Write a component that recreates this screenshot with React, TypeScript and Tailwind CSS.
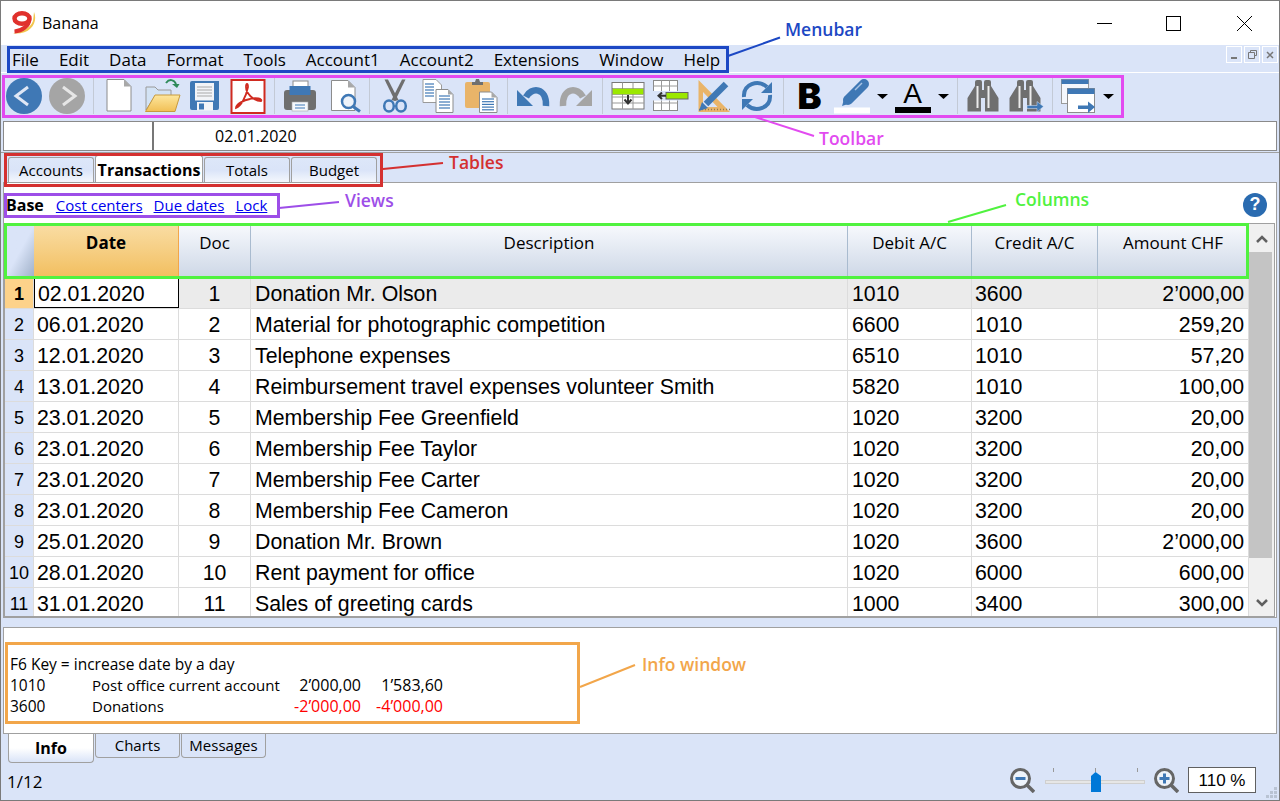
import React from 'react';

const UI = { fontFamily: '"Open Sans", "Noto Sans", sans-serif' };
const ARIAL = { fontFamily: '"Liberation Sans", Arial, sans-serif' };

const BLUE = '#3f78b5';
const GRAY = '#6f6f6f';

const menus = ['File', 'Edit', 'Data', 'Format', 'Tools', 'Account1', 'Account2', 'Extensions', 'Window', 'Help'];

const rows = [
  ['02.01.2020', '1', 'Donation Mr. Olson', '1010', '3600', '2’000,00'],
  ['06.01.2020', '2', 'Material for photographic competition', '6600', '1010', '259,20'],
  ['12.01.2020', '3', 'Telephone expenses', '6510', '1010', '57,20'],
  ['13.01.2020', '4', 'Reimbursement travel expenses volunteer Smith', '5820', '1010', '100,00'],
  ['23.01.2020', '5', 'Membership Fee Greenfield', '1020', '3200', '20,00'],
  ['23.01.2020', '6', 'Membership Fee Taylor', '1020', '3200', '20,00'],
  ['23.01.2020', '7', 'Membership Fee Carter', '1020', '3200', '20,00'],
  ['23.01.2020', '8', 'Membership Fee Cameron', '1020', '3200', '20,00'],
  ['25.01.2020', '9', 'Donation Mr. Brown', '1020', '3600', '2’000,00'],
  ['28.01.2020', '10', 'Rent payment for office', '1020', '6000', '600,00'],
  ['31.01.2020', '11', 'Sales of greeting cards', '1000', '3400', '300,00'],
];

// every toolbar icon is drawn in screenshot coordinates, cx is the middle of its 43px cell
function Ico({ cx, children }: { cx: number; children: React.ReactNode }) {
  return (
    <div className="w-[43px] h-[40px] shrink-0">
      <svg width="43" height="40" viewBox={`${cx - 21.5} 76 43 40`}>{children}</svg>
    </div>
  );
}

function Sep() {
  return <div className="w-px h-[36px] mx-[4px] bg-[#c3cad6] shrink-0" />;
}

function Drop() {
  return (
    <svg width="11" height="5" viewBox="0 0 11 5" className="shrink-0">
      <path d="M0 0H11L5.5 5Z" fill="#000" />
    </svg>
  );
}

function DocLines({ x, y, w, n, gap = 3 }: { x: number; y: number; w: number; n: number; gap?: number }) {
  return (
    <>
      {Array.from({ length: n }).map((_, i) => (
        <path key={i} d={`M${x} ${y + i * gap}h${w}`} stroke={BLUE} strokeWidth="1.2" />
      ))}
    </>
  );
}

function Binoculars({ dx = 0 }: { dx?: number }) {
  return (
    <g transform={`translate(${dx} 0)`}>
      <path d="M975 82a2 2 0 0 1 2-2h3a2 2 0 0 1 2 2V90H984V82a2 2 0 0 1 2-2h3a2 2 0 0 1 2 2V86L998.5 98V111.500H985V98H981V111.500H967.500V98L975 86Z" fill={GRAY} />
      <path d="M977.500 86V108M988.500 86V108" stroke="#ececec" strokeWidth="2" />
    </g>
  );
}

function Toolbar() {
  return (
    <div className="h-[44px] flex items-center pl-[2px] mt-px shrink-0">
      <Ico cx={24.5}>
        <circle cx="24" cy="96" r="18" fill={BLUE} />
        <path d="M28 87L16 96L28 105" fill="none" stroke="#dfe7f5" strokeWidth="3" />
      </Ico>
      <Ico cx={67.5}>
        <circle cx="67" cy="96" r="18" fill="#a5a5a5" />
        <path d="M63 87L75 96L63 105" fill="none" stroke="#e6e6e6" strokeWidth="3" />
      </Ico>
      <Sep />
      <Ico cx={119.5}>
        <path d="M107 79.500H124L131 86.500V111H107Z" fill="#fff" stroke="#8c8c8c" />
        <path d="M124 79.500V86.500H131Z" fill="#a8a8a8" />
      </Ico>
      <Ico cx={162.5}>
        <path d="M146 110V87H155L158 90H171V96H155L146 110Z" fill="#d3e3f5" stroke="#9a9a9a" />
        <defs>
          <linearGradient id="folder" x1="0" y1="0" x2="0" y2="1">
            <stop offset="0" stopColor="#fde79e" />
            <stop offset="1" stopColor="#f1bf55" />
          </linearGradient>
        </defs>
        <path d="M155 95H180L175 111.500H145.500Z" fill="url(#folder)" stroke="#c79a3e" />
        <path d="M166 83C169 79 174 79 176 84" fill="none" stroke="#2f8a5a" strokeWidth="2" />
        <path d="M172 84H179.500L177 88Z" fill="#2f8a5a" />
      </Ico>
      <Ico cx={205.5}>
        <path d="M190 83a2 2 0 0 1 2-2H219V108a2 2 0 0 1-2 2H192a2 2 0 0 1-2-2Z" fill={BLUE} />
        <rect x="195" y="83" width="19" height="17.500" fill="#f2f4f8" />
        <path d="M197 87h15M197 90h15M197 93h15M197 96h15" stroke="#a8a8a8" />
        <rect x="197" y="102" width="16" height="8.500" fill="#f2f4f8" />
        <rect x="199" y="103.500" width="5" height="6" fill={BLUE} />
      </Ico>
      <Ico cx={248.5}>
        <rect x="231.500" y="80" width="33" height="33" fill="#fff" stroke="#d02b20" strokeWidth="2" />
        <path d="M236 108C241 106 246 97 248 87C248 83 246 83 246 87C246 93 253 101 261 101C263 99 256 97 250 99C244 100 236 104 236 108Z" fill="none" stroke="#d02b20" strokeWidth="1.800" />
      </Ico>
      <Sep />
      <Ico cx={300.5}>
        <rect x="293" y="81" width="15" height="7" fill="#fff" stroke="#8c8c8c" />
        <path d="M284 93a3 3 0 0 1 3-3H313a3 3 0 0 1 3 3V107a3 3 0 0 1-3 3H287a3 3 0 0 1-3-3Z" fill={GRAY} />
        <rect x="289.500" y="86" width="21" height="9" fill={BLUE} />
        <rect x="292" y="102" width="16" height="9" fill="#f5f8fc" stroke="#a8a8a8" strokeWidth=".6" />
        <path d="M295 105h10M295 108h10" stroke={BLUE} />
      </Ico>
      <Ico cx={343.5}>
        <path d="M331.500 80.500H348L355 87.500V110.500H331.500Z" fill="#fff" stroke="#8c8c8c" />
        <path d="M348 80.500V87.500H355Z" fill="#a8a8a8" />
        <circle cx="348.500" cy="101.500" r="6.500" fill="#eef3fa" stroke={BLUE} strokeWidth="2.500" />
        <path d="M353 106.500L360 111.500" stroke={BLUE} strokeWidth="3" />
      </Ico>
      <Sep />
      <Ico cx={395.5}>
        <path d="M384.500 79.500H388L398.500 100L395 101Z" fill={GRAY} />
        <path d="M405.500 79.500H402L391.500 100L395 101Z" fill={GRAY} />
        <ellipse cx="389" cy="106" rx="4.800" ry="5.500" fill="none" stroke={BLUE} strokeWidth="2.500" />
        <ellipse cx="401" cy="106" rx="4.800" ry="5.500" fill="none" stroke={BLUE} strokeWidth="2.500" />
      </Ico>
      <Ico cx={438.5}>
        <path d="M423 79.500H436L441.500 85V102.500H423Z" fill="#fff" stroke="#9a9a9a" />
        <DocLines x={425} y={84} w={9} n={5} />
        <path d="M436 89.500H448L453 94.500V112.500H436Z" fill="#fff" stroke="#8c8c8c" />
        <path d="M448 89.500V94.500H453Z" fill="#a8a8a8" />
        <DocLines x={439} y={96} w={11} n={5} />
      </Ico>
      <Ico cx={481.5}>
        <rect x="465" y="82" width="25" height="26" rx="2" fill="#e9b469" />
        <path d="M472 85V82H475L476 79H479L480 82H483V85Z" fill={GRAY} />
        <path d="M479.500 92H491.500L497 97.500V112.500H479.500Z" fill="#fff" stroke="#8c8c8c" />
        <path d="M491.500 92V97.500H497Z" fill="#a8a8a8" />
        <DocLines x={482} y={99} w={12} n={5} gap={2.7} />
      </Ico>
      <Sep />
      <Ico cx={533.5}>
        <path d="M526 97C531 87 547 87 546 106" fill="none" stroke={BLUE} strokeWidth="6.500" />
        <path d="M517 90V106H533Z" fill={BLUE} />
      </Ico>
      <Ico cx={576.5}>
        <path d="M583 97C578 87 562 87 563 106" fill="none" stroke="#a5a5a5" strokeWidth="6.500" />
        <path d="M592 90V106H576Z" fill="#a5a5a5" />
      </Ico>
      <Sep />
      <Ico cx={628.5}>
        <rect x="612" y="82.500" width="32" height="26.500" fill="#fff" stroke="#777" />
        <path d="M622.500 82.500V109M633 82.500V109M612 97H644M612 103H644" stroke="#999" />
        <rect x="612.500" y="88.500" width="31" height="6" fill="#9be800" stroke="#777" strokeWidth=".5" />
        <path d="M628 95V102M624.500 99.500L628 103.500L631.500 99.500" fill="none" stroke="#333" strokeWidth="2" />
      </Ico>
      <Ico cx={671.5}>
        <rect x="653.500" y="80.500" width="24" height="30" fill="#fff" stroke="#8a8a8a" />
        <path d="M661.500 80.500V110.500M669.500 80.500V110.500M653.500 86H677.500M653.500 103H677.500" stroke="#9a9a9a" />
        <rect x="653" y="91" width="25" height="9.500" fill="#dae4f8" />
        <rect x="666" y="92.500" width="22" height="6.500" fill="#9be800" stroke="#666" />
        <path d="M666 95.800H659M662 92.500L658.500 95.800L662 99" fill="none" stroke="#333" strokeWidth="2" />
      </Ico>
      <Ico cx={714.5}>
        <path fillRule="evenodd" d="M698.500 80L730 112H698.500ZM703 92V107H717.500Z" fill="#e9b469" />
        <path d="M699 109.500H730" stroke="#8f7a55" strokeWidth="1.500" strokeDasharray="1 2" />
        <path d="M726 84L706 104" stroke={BLUE} strokeWidth="6.500" />
        <path d="M699 111L702 102L708 108Z" fill={BLUE} />
      </Ico>
      <Ico cx={757.5}>
        <path d="M744 97C743 84 758 79 767 87" fill="none" stroke={BLUE} strokeWidth="4" />
        <path d="M770 95C771 108 756 113 747 105" fill="none" stroke={BLUE} strokeWidth="4" />
        <path d="M772 82V93H761Z" fill={BLUE} />
        <path d="M742 110V99H753Z" fill={BLUE} />
      </Ico>
      <Sep />
      <div className="w-[43px] h-[40px] shrink-0 flex items-center justify-center text-[36px] font-black text-black leading-none" style={{ fontFamily: 'Inter, sans-serif' }}>
        B
      </div>
      <Ico cx={852.5}>
        <path d="M864 84L848 100" stroke={BLUE} strokeWidth="10" strokeLinecap="round" />
        <path d="M845 96L851 103L842 106Z" fill={BLUE} />
        <path d="M862 83L855 90" stroke="#a9c4e4" strokeWidth="1.500" />
        <rect x="834" y="107.500" width="36" height="6" fill="#fff" />
      </Ico>
      <div className="w-[17px] shrink-0 flex justify-center">
        <Drop />
      </div>
      <div className="w-[43px] h-[40px] shrink-0 flex flex-col items-center justify-start">
        <span className="text-[28px] leading-[30px] text-black mt-[3px] h-[28px]" style={ARIAL}>A</span>
        <div className="w-[36px] h-[6px] bg-black" />
      </div>
      <div className="w-[19px] shrink-0 flex justify-center">
        <Drop />
      </div>
      <Sep />
      <Ico cx={983.5}>
        <Binoculars />
      </Ico>
      <Ico cx={1026.5}>
        <Binoculars dx={42} />
        <path d="M1027 105.500H1037V101.500L1043.500 106.500L1037 112V108.500H1027Z" fill={BLUE} stroke="#dae4f8" strokeWidth=".5" />
      </Ico>
      <Sep />
      <Ico cx={1078.5}>
        <rect x="1061.500" y="79.500" width="27" height="24" fill="#f4f7fc" stroke="#9a9a9a" />
        <rect x="1061.500" y="79.500" width="27" height="4.500" fill={BLUE} />
        <rect x="1067.500" y="88.500" width="27" height="24" fill="#fff" stroke="#8c8c8c" />
        <rect x="1067.500" y="88.500" width="27" height="5.500" fill={BLUE} />
        <path d="M1078 105.500H1088V101.500L1095 107L1088 113V109H1078Z" fill={BLUE} />
      </Ico>
      <div className="w-[17px] shrink-0 flex justify-center">
        <Drop />
      </div>
    </div>
  );
}

function TopTab({ label, active }: { label: string; active?: boolean }) {
  if (active) {
    return (
      <div className="w-[108px] h-[27px] -mt-[2px] pt-[2px] bg-white border border-b-0 border-[#a0a0a0] rounded-t-[3px] text-[16px] font-bold text-black flex items-center justify-center">
        {label}
      </div>
    );
  }
  return (
    <div className="w-[86px] h-[25px] bg-gradient-to-b from-[#dde7f9] via-[#dae4f8] to-[#f4f7fd] border border-b-0 border-[#a0a0a0] rounded-t-[3px] text-[15px] text-black flex items-center justify-center">
      {label}
    </div>
  );
}

function HeadCell({ label, className, active }: { label: string; className: string; active?: boolean }) {
  return (
    <div
      className={`${className} h-full shrink-0 pt-[5px] text-center text-[17px] text-black border-r ${
        active
          ? 'font-bold bg-gradient-to-b from-[#f9dda3] to-[#f2be5c] border-[#f2a64a]'
          : 'bg-gradient-to-b from-[#f7f9fd] to-[#cdd7e6] border-[#a9bbcf]'
      }`}
    >
      {label}
    </div>
  );
}

function Grid() {
  return (
    <div className="flex-1 min-h-0 mr-px flex border border-[#a0a0a0] overflow-hidden">
      <div className="w-[1244px] shrink-0 flex flex-col">
        <div className="flex h-[53px] shrink-0 mt-px">
          <div className="w-[29px] h-full shrink-0 bg-gradient-to-br from-[#dae4f8] via-[#dae4f8] to-[#9fb0c8]" />
          <HeadCell label="Date" className="w-[145px]" active />
          <HeadCell label="Doc" className="w-[72px]" />
          <HeadCell label="Description" className="w-[597px]" />
          <HeadCell label="Debit A/C" className="w-[124px]" />
          <HeadCell label="Credit A/C" className="w-[126px]" />
          <HeadCell label="Amount CHF" className="w-[151px]" />
        </div>
        <div className="flex-1 min-h-0 overflow-hidden text-[21.3px] text-black" style={ARIAL}>
          {rows.map((r, i) => (
            <div key={i} className={`flex h-[31px] border-b border-[#dcdcdc] ${i === 0 ? 'bg-[#ebebeb]' : 'bg-white'}`}>
              <div className={`w-[29px] shrink-0 flex items-center justify-center pt-[3px] text-[18px] border-r border-[#dcdcdc] ${i === 0 ? 'bg-[#fdd28a] font-bold' : 'bg-[#dae4f8]'}`}>
                {i + 1}
              </div>
              <div className={`w-[145px] shrink-0 flex items-center pl-[3px] pt-[4px] border-r ${i === 0 ? 'bg-white border border-black' : 'border-[#dcdcdc]'}`}>
                {r[0]}
              </div>
              <div className="w-[72px] shrink-0 flex items-center justify-center pt-[4px] border-r border-[#dcdcdc]">{r[1]}</div>
              <div className="w-[597px] shrink-0 flex items-center pl-[4px] pt-[4px] border-r border-[#dcdcdc]">{r[2]}</div>
              <div className="w-[124px] shrink-0 flex items-center pl-[4px] pt-[4px] border-r border-[#dcdcdc]">{r[3]}</div>
              <div className="w-[126px] shrink-0 flex items-center pl-[3px] pt-[4px] border-r border-[#dcdcdc]">{r[4]}</div>
              <div className="w-[151px] shrink-0 flex items-center justify-end pr-[4px] pt-[4px] border-r border-[#dcdcdc]">{r[5]}</div>
            </div>
          ))}
        </div>
      </div>
      {/* Scrollbar */}
      <div className="flex-1 flex flex-col bg-[#f0f0f0] pt-[2px]">
        <div className="h-[26px] flex items-center justify-center">
          <svg width="14" height="10" viewBox="0 0 14 10">
            <path d="M2 8L7 3L12 8" fill="none" stroke="#606060" strokeWidth="2.500" />
          </svg>
        </div>
        <div className="h-[306px] mr-[2px] bg-[#c4c4c4]" />
        <div className="mt-auto h-[26px] flex items-center justify-center">
          <svg width="14" height="10" viewBox="0 0 14 10">
            <path d="M2 2L7 7L12 2" fill="none" stroke="#606060" strokeWidth="2.500" />
          </svg>
        </div>
      </div>
    </div>
  );
}

function Annotations() {
  const lines = [
    ['M728 56L780 37.500', '#1c48c4'],
    ['M755 117L814 136', '#e24bf0'],
    ['M383 169L443 163', '#d43030'],
    ['M279 208L339 202', '#9d4ee8'],
    ['M948 222L1006 205', '#50f23f'],
    ['M580 687L635 665', '#f2a64a'],
  ];
  return (
    <>
      <div className="absolute left-[6px] top-[45px] w-[722px] h-[27px] border-[3px] border-[#1c48c4]" />
      <div className="absolute left-[1px] top-[74px] w-[1122px] h-[43px] border-[3px] border-[#e24bf0]" />
      <div className="absolute left-[3px] top-[152px] w-[379px] h-[34px] border-[3px] border-[#d43030]" />
      <div className="absolute left-[3px] top-[192px] w-[276px] h-[25px] border-[3px] border-[#9d4ee8]" />
      <div className="absolute left-[3px] top-[222px] w-[1245px] h-[56px] border-[3px] border-[#50f23f]" />
      <div className="absolute left-[4px] top-[641px] w-[575px] h-[82px] border-[3px] border-[#f2a64a]" />
      <svg className="absolute -left-px -top-px pointer-events-none" width="1280" height="801">
        {lines.map(([d, c]) => (
          <path key={d} d={d} stroke={c} strokeWidth="2" fill="none" />
        ))}
      </svg>
      <span className="absolute left-[784px] top-[17px] text-[17.5px] leading-[22px] font-semibold text-[#1c48c4]">Menubar</span>
      <span className="absolute left-[818px] top-[126px] text-[17.5px] leading-[22px] font-semibold text-[#e24bf0]">Toolbar</span>
      <span className="absolute left-[448px] top-[150px] text-[17.5px] leading-[22px] font-semibold text-[#d43030]">Tables</span>
      <span className="absolute left-[344px] top-[188px] text-[17.5px] leading-[22px] font-semibold text-[#9d4ee8]">Views</span>
      <span className="absolute left-[1014px] top-[187px] text-[17.5px] leading-[22px] font-semibold text-[#50f23f]">Columns</span>
      <span className="absolute left-[641px] top-[652px] text-[17.5px] leading-[22px] font-semibold text-[#f2a64a]">Info window</span>
    </>
  );
}

export default function App() {
  return (
    <div className="relative w-[1280px] h-[801px] overflow-hidden bg-[#dae4f8] border border-[#7a7a7a] flex flex-col text-black" style={UI}>
      {/* Title bar */}
      <div className="h-[44px] shrink-0 bg-white flex items-center">
        <svg width="26" height="26" viewBox="11 9 26 26" className="ml-[10px] shrink-0">
          <path d="M34 11C38 20 32 34 13 32.500C22 30 30 28 33 20Z" fill="#f2c64f" />
          <ellipse cx="22" cy="17.500" rx="7.500" ry="5.300" fill="none" stroke="#e0312c" strokeWidth="4.500" />
          <path d="M29.500 18C29 25 22 30 14.500 30.500" fill="none" stroke="#e0312c" strokeWidth="4" />
        </svg>
        <span className="ml-[5px] text-[16px]">Banana</span>
        <div className="ml-auto flex items-center">
          <svg width="190" height="20" viewBox="0 0 190 20" className="mr-[25px]">
            <path d="M33 10.500H48" stroke="#000" />
            <rect x="102.500" y="3.500" width="14" height="14" fill="none" stroke="#000" />
            <path d="M173 3L188 18M188 3L173 18" stroke="#000" />
          </svg>
        </div>
      </div>

      {/* Menu bar */}
      <div className="h-[28px] shrink-0 flex items-center border-b border-white">
        <div className="flex items-center gap-[20px] pl-[11px] pt-px text-[17px] leading-none">
          {menus.map(m => (
            <span key={m}>{m}</span>
          ))}
        </div>
        <div className="ml-auto flex gap-[2px] pr-px self-start mt-px">
          <div className="w-[16px] h-[17px] border border-white flex items-end justify-center pb-[3px]">
            <div className="w-[6px] h-[2px] bg-[#777]" />
          </div>
          <div className="w-[16px] h-[17px] border border-white flex items-center justify-center">
            <svg width="9" height="9" viewBox="0 0 9 9">
              <path d="M2.500 2.500V.5H8.500V5.500H6.500M.5 2.500H6.500V8.500H.5Z" fill="none" stroke="#777" />
            </svg>
          </div>
          <div className="w-[16px] h-[17px] border border-white flex items-center justify-center">
            <svg width="8" height="8" viewBox="0 0 8 8">
              <path d="M1 1L7 7M7 1L1 7" stroke="#777" strokeWidth="1.500" />
            </svg>
          </div>
        </div>
      </div>

      <Toolbar />

      {/* Formula bar */}
      <div className="h-[30px] mt-[3px] mx-[2px] shrink-0 flex bg-white border border-[#8a8a8a] text-[16px]">
        <div className="w-[150px] border-r-2 border-[#777]" />
        <div className="pl-[61px] flex items-center">02.01.2020</div>
      </div>

      {/* Table tabs */}
      <div className="h-[30px] mt-px shrink-0 border-t border-[#a0a0a0] flex items-end pl-[7px] gap-px">
        <TopTab label="Accounts" />
        <TopTab label="Transactions" active />
        <TopTab label="Totals" />
        <TopTab label="Budget" />
      </div>

      {/* Main panel */}
      <div className="h-[436px] mx-[2px] shrink-0 bg-white border border-[#a0a0a0] flex flex-col">
        <div className="h-[40px] shrink-0 flex items-center pl-[2px] pt-[4px] text-[15px]">
          <span className="font-bold text-[16px]">Base</span>
          <a className="ml-[12px] text-[#0000ee] underline">Cost centers</a>
          <a className="ml-[11px] text-[#0000ee] underline">Due dates</a>
          <a className="ml-[11px] text-[#0000ee] underline">Lock</a>
          <div className="ml-auto mr-[9px] -mt-px w-[24px] h-[24px] rounded-full bg-[#2a6bb0] text-white font-bold text-[18px] flex items-center justify-center" style={ARIAL}>?</div>
        </div>
        <Grid />
      </div>

      {/* Info panel */}
      <div className="h-[107px] mt-[9px] mx-[2px] shrink-0 bg-white border border-[#a0a0a0] pl-[6px] pt-[26px] text-[15.5px] leading-[21px]">
        <div>F6 Key = increase date by a day</div>
        <div className="grid grid-cols-[82px_195px_74px_82px]">
          <span>1010</span>
          <span className="text-[15px]">Post office current account</span>
          <span className="text-right text-[16px]">2’000,00</span>
          <span className="text-right text-[16px]">1’583,60</span>
          <span>3600</span>
          <span className="text-[15px]">Donations</span>
          <span className="text-right text-[16px] text-[#ff0000]">-2’000,00</span>
          <span className="text-right text-[16px] text-[#ff0000]">-4’000,00</span>
        </div>
      </div>

      {/* Info tabs */}
      <div className="flex pl-[7px] gap-px shrink-0 items-start">
        <div className="w-[86px] h-[29px] bg-gradient-to-b from-white via-white to-[#dae4f8] border border-t-0 border-[#a0a0a0] rounded-b-[4px] font-bold text-[16px] flex items-center justify-center">
          Info
        </div>
        <div className="w-[85px] h-[24px] bg-[#dae4f8] border border-t-0 border-[#a0a0a0] rounded-b-[4px] text-[15px] flex items-center justify-center">Charts</div>
        <div className="w-[85px] h-[24px] bg-[#dae4f8] border border-t-0 border-[#a0a0a0] rounded-b-[4px] text-[15px] flex items-center justify-center">Messages</div>
      </div>

      {/* Status bar */}
      <div className="flex-1 flex items-center pl-[6px] pb-[3px]">
        <span className="text-[17px] mt-[3px]">1/12</span>
        <div className="ml-auto flex items-center mr-[23px]">
          <svg width="25" height="25" viewBox="0 0 25 25">
            <circle cx="10.500" cy="10.500" r="9" fill="#eef3fa" stroke="#666" strokeWidth="3" />
            <path d="M17 17L24 24" stroke="#666" strokeWidth="3.500" />
            <path d="M5.500 10.500H15.500" stroke={BLUE} strokeWidth="3" />
          </svg>
          <svg width="100" height="26" viewBox="0 0 100 26" className="ml-[10px]">
            <rect x=".5" y="13.500" width="99" height="3" fill="#e6e6e6" stroke="#cfcfcf" />
            <path d="M8.500 1V5M50.500 1V5M92.500 1V5" stroke="#999" />
            <path d="M46 9L50.500 5L56 9V25H46Z" fill="#0078d7" />
          </svg>
          <svg width="25" height="25" viewBox="0 0 25 25" className="ml-[9px]">
            <circle cx="10.500" cy="10.500" r="9" fill="#eef3fa" stroke="#666" strokeWidth="3" />
            <path d="M17 17L24 24" stroke="#666" strokeWidth="3.500" />
            <path d="M5.500 10.500H15.500M10.500 5.500V15.500" stroke={BLUE} strokeWidth="3" />
          </svg>
          <div className="ml-[9px] w-[68px] h-[26px] pt-px bg-white border border-[#606060] flex items-center justify-center text-[17px]" style={ARIAL}>110 %</div>
        </div>
        <svg width="11" height="11" viewBox="0 0 11 11" className="absolute right-[2px] bottom-[2px]">
          <path d="M8 0h3v3H8ZM4 4h3v3H4ZM8 4h3v3H8ZM0 8h3v3H0ZM4 8h3v3H4ZM8 8h3v3H8Z" fill="#b9c3d3" />
        </svg>
      </div>

      <Annotations />
    </div>
  );
}
